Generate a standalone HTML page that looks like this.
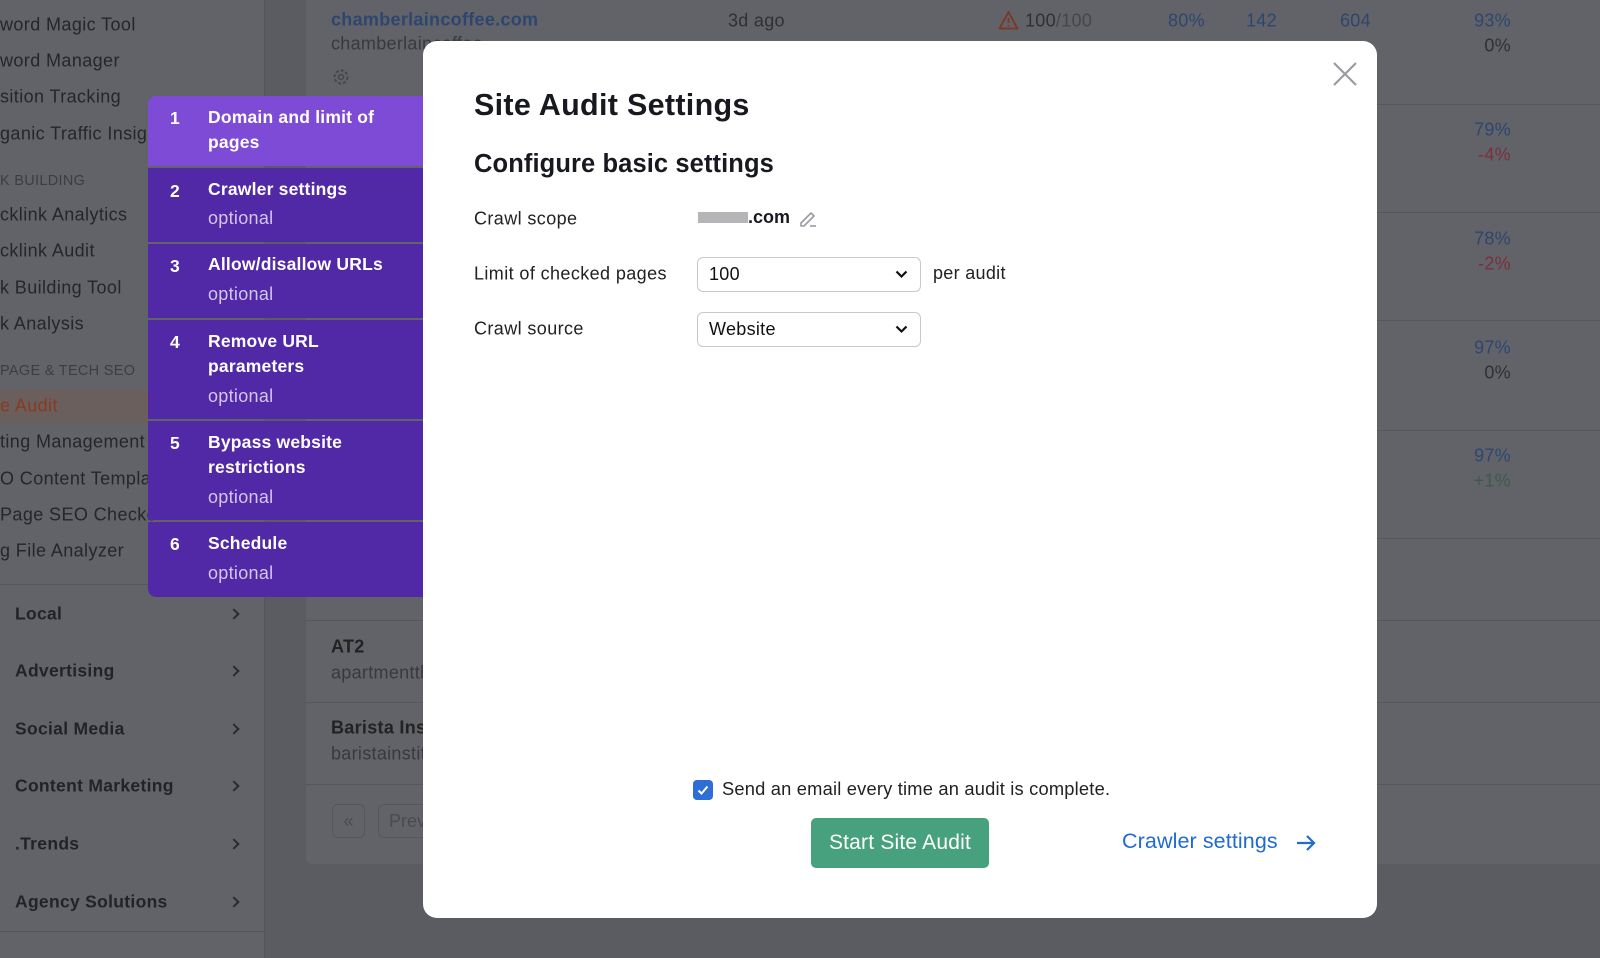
<!DOCTYPE html>
<html><head><meta charset="utf-8"><style>
*{box-sizing:border-box;margin:0;padding:0}
body{width:1600px;height:958px;overflow:hidden;background:#5b5c61;font-family:"Liberation Sans",sans-serif;position:relative;color:#222}
.a{position:absolute;white-space:nowrap}
.sb{position:absolute;left:0;top:0;width:265px;height:958px;background:#626368;border-right:1px solid #56575c}
.si{position:absolute;left:0;font-size:18px;letter-spacing:.4px;color:#25262b;transform:translateY(-50%)}
.sec{position:absolute;left:0;font-size:14.5px;letter-spacing:.3px;color:#3c3d42;transform:translateY(-50%)}
.grp{position:absolute;left:15px;font-size:17.5px;letter-spacing:.3px;font-weight:bold;color:#222328;transform:translateY(-50%)}
.chev{position:absolute;left:230px;width:8px;height:8px;border-right:2px solid #2a2b30;border-top:2px solid #2a2b30;transform:translateY(-50%) rotate(45deg)}
.hl{position:absolute;left:0;top:389px;width:148px;height:34px;background:#6a5f5d}
.card{position:absolute;left:306px;top:0;width:1300px;height:864px;background:#626368;border-radius:0 0 6px 6px}
.sep{position:absolute;left:306px;width:1294px;height:1px;background:#56575c}
.tv{position:absolute;font-size:18px;letter-spacing:.3px;transform:translateY(-50%)}
.blue{color:#2d4670}.red{color:#7a2f3a}.grn{color:#3e5a4a}.gry{color:#2f3035}
.step{position:absolute;left:148px;width:275px;background:#5128a6;color:#fff}
.step .n{position:absolute;left:22px;font-size:17.5px;font-weight:bold}
.step .t{position:absolute;left:60px;font-size:17.5px;letter-spacing:.2px;font-weight:bold;line-height:25px}
.step .o{position:absolute;left:60px;font-size:18px;letter-spacing:.3px;color:#d3c6f0}
.modal{position:absolute;left:423px;top:41px;width:954px;height:877px;background:#fff;border-radius:14px}
.lbl{position:absolute;left:51px;font-size:18px;letter-spacing:.4px;color:#222;transform:translateY(-50%)}
.sel{position:absolute;left:274px;width:224px;height:35px;border:1px solid #c8c9ce;border-radius:6px;font-size:18px;letter-spacing:.3px;padding:0 0 0 11px;line-height:33px;color:#111}
.sel svg{position:absolute;right:12px;top:12px}
</style></head><body>
<div class="sb">
<div class="si" style="top:25px">word Magic Tool</div>
<div class="si" style="top:61px">word Manager</div>
<div class="si" style="top:97px">sition Tracking</div>
<div class="si" style="top:134px">ganic Traffic Insigh</div>
<div class="sec" style="top:181px">K BUILDING</div>
<div class="si" style="top:215px">cklink Analytics</div>
<div class="si" style="top:251px">cklink Audit</div>
<div class="si" style="top:288px">k Building Tool</div>
<div class="si" style="top:324px">k Analysis</div>
<div class="sec" style="top:371px">PAGE &amp; TECH SEO</div>
<div class="hl"></div>
<div class="si" style="top:406px;color:#8a3a22">e Audit</div>
<div class="si" style="top:442px">ting Management</div>
<div class="si" style="top:479px">O Content Templat</div>
<div class="si" style="top:515px">Page SEO Checke</div>
<div class="si" style="top:551px">g File Analyzer</div>
<div class="a" style="left:0;top:584px;width:265px;height:1px;background:#56575c"></div>
<div class="grp" style="top:614px">Local</div><div class="chev" style="top:614px"></div>
<div class="grp" style="top:671px">Advertising</div><div class="chev" style="top:671px"></div>
<div class="grp" style="top:729px">Social Media</div><div class="chev" style="top:729px"></div>
<div class="grp" style="top:786px">Content Marketing</div><div class="chev" style="top:786px"></div>
<div class="grp" style="top:844px">.Trends</div><div class="chev" style="top:844px"></div>
<div class="grp" style="top:902px">Agency Solutions</div><div class="chev" style="top:902px"></div>
<div class="a" style="left:0;top:931px;width:265px;height:1px;background:#56575c"></div>
</div>
<div class="card"></div>
<div class="sep" style="top:104px"></div><div class="sep" style="top:212px"></div><div class="sep" style="top:320px"></div><div class="sep" style="top:430px"></div><div class="sep" style="top:538px"></div><div class="sep" style="top:620px"></div><div class="sep" style="top:702px"></div><div class="sep" style="top:784px"></div>
<div class="tv blue" style="left:331px;top:20px;font-weight:bold">chamberlaincoffee.com</div>
<div class="tv gry" style="left:331px;top:44px;color:#38393e">chamberlaincoffee</div>
<svg class="a" style="left:331px;top:67px" width="20" height="20" viewBox="0 0 20 20"><circle cx="10" cy="10" r="6.5" fill="none" stroke="#45464b" stroke-width="2" stroke-dasharray="3 2"/><circle cx="10" cy="10" r="2.5" fill="none" stroke="#45464b" stroke-width="1.5"/></svg>
<div class="tv gry" style="left:728px;top:21px">3d ago</div>
<svg class="a" style="left:998px;top:10px" width="21" height="20" viewBox="0 0 21 20"><path d="M10.5 2 L19.5 18.5 H1.5 Z" fill="none" stroke="#7a3a2a" stroke-width="2" stroke-linejoin="round"/><path d="M10.5 8v5M10.5 15v1.5" stroke="#7a3a2a" stroke-width="2"/></svg>
<div class="tv gry" style="left:1025px;top:21px">100<span style="color:#45464b">/100</span></div>
<div class="tv blue" style="left:1168px;top:21px">80%</div>
<div class="tv blue" style="left:1246px;top:21px">142</div>
<div class="tv blue" style="left:1340px;top:21px">604</div>
<div class="tv blue" style="right:89px;top:21px">93%</div><div class="tv gry" style="right:89px;top:46px">0%</div>
<div class="tv blue" style="right:89px;top:130px">79%</div><div class="tv red" style="right:89px;top:155px">-4%</div>
<div class="tv blue" style="right:89px;top:239px">78%</div><div class="tv red" style="right:89px;top:264px">-2%</div>
<div class="tv blue" style="right:89px;top:348px">97%</div><div class="tv gry" style="right:89px;top:373px">0%</div>
<div class="tv blue" style="right:89px;top:456px">97%</div><div class="tv grn" style="right:89px;top:481px">+1%</div>
<div class="tv gry" style="left:331px;top:647px;font-weight:bold;color:#222">AT2</div>
<div class="tv gry" style="left:331px;top:673px;color:#38393e">apartmenttherapy</div>
<div class="tv gry" style="left:331px;top:728px;font-weight:bold;color:#222">Barista Institute</div>
<div class="tv gry" style="left:331px;top:754px;color:#38393e">baristainstitute</div>
<div class="a" style="left:332px;top:804px;width:33px;height:34px;border:1px solid #56575c;border-radius:6px;color:#4a4b50;font-size:18px;text-align:center;line-height:32px">«</div>
<div class="a" style="left:378px;top:804px;width:80px;height:34px;border:1px solid #56575c;border-radius:6px;color:#4a4b50;font-size:18px;padding-left:10px;line-height:32px">Prev</div>

<div class="step" style="top:96px;height:70px;background:#7d4bd6;border-radius:8px 0 0 0"><div class="n" style="top:12px">1</div><div class="t" style="top:9px">Domain and limit of<br>pages</div></div>
<div class="step" style="top:168px;height:74px"><div class="n" style="top:13px">2</div><div class="t" style="top:9px">Crawler settings</div><div class="o" style="top:40px">optional</div></div>
<div class="step" style="top:244px;height:74px"><div class="n" style="top:12px">3</div><div class="t" style="top:8px">Allow/disallow URLs</div><div class="o" style="top:40px">optional</div></div>
<div class="step" style="top:320px;height:99px"><div class="n" style="top:12px">4</div><div class="t" style="top:9px">Remove URL<br>parameters</div><div class="o" style="top:66px">optional</div></div>
<div class="step" style="top:421px;height:99px"><div class="n" style="top:12px">5</div><div class="t" style="top:9px">Bypass website<br>restrictions</div><div class="o" style="top:66px">optional</div></div>
<div class="step" style="top:522px;height:75px;border-radius:0 0 0 8px"><div class="n" style="top:12px">6</div><div class="t" style="top:9px">Schedule</div><div class="o" style="top:41px">optional</div></div>

<div class="modal">
<svg class="a" style="left:909px;top:20px" width="26" height="26" viewBox="0 0 26 26"><path d="M2 2L24 24M24 2L2 24" stroke="#9a9ba3" stroke-width="2.2"/></svg>
<div class="a" style="left:51px;top:47px;font-size:30.5px;letter-spacing:.3px;font-weight:bold;color:#181920">Site Audit Settings</div>
<div class="a" style="left:51px;top:109px;font-size:25.5px;letter-spacing:.1px;font-weight:bold;color:#181920">Configure basic settings</div>
<div class="lbl" style="top:178px">Crawl scope</div>
<div class="a" style="left:275px;top:171px;width:50px;height:11px;background:#b5b5b8"></div>
<div class="a" style="left:325px;top:166px;font-size:18px;font-weight:bold;color:#181920">.com</div>
<svg class="a" style="left:375px;top:167px" width="20" height="20" viewBox="0 0 20 20"><path d="M3 15L13 5l3 3-10 10H3z" fill="none" stroke="#9a9ba3" stroke-width="1.6" stroke-linejoin="round"/><path d="M12 18h6" stroke="#9a9ba3" stroke-width="1.6"/></svg>
<div class="lbl" style="top:233px">Limit of checked pages</div>
<div class="sel" style="top:216px">100<svg width="13" height="9" viewBox="0 0 13 9"><path d="M1.5 1.5L6.5 6.5 11.5 1.5" fill="none" stroke="#111" stroke-width="2.2"/></svg></div>
<div class="a" style="left:510px;top:222px;font-size:18px;letter-spacing:.3px;color:#222">per audit</div>
<div class="lbl" style="top:288px">Crawl source</div>
<div class="sel" style="top:271px">Website<svg width="13" height="9" viewBox="0 0 13 9"><path d="M1.5 1.5L6.5 6.5 11.5 1.5" fill="none" stroke="#111" stroke-width="2.2"/></svg></div>
<div class="a" style="left:270px;top:739px;width:20px;height:20px;background:#2e6ed6;border-radius:4px"><svg width="20" height="20" viewBox="0 0 20 20"><path d="M5.5 10.5l3 3 6-7" fill="none" stroke="#fff" stroke-width="2"/></svg></div>
<div class="a" style="left:299px;top:737px;font-size:18.3px;letter-spacing:.2px;color:#222">Send an email every time an audit is complete.</div>
<div class="a" style="left:388px;top:777px;width:178px;height:50px;background:#47a07e;border-radius:5px;color:#fff;font-size:21px;letter-spacing:.2px;text-align:center;line-height:50px">Start Site Audit</div>
<div class="a" style="left:699px;top:788px;font-size:21.5px;letter-spacing:.1px;color:#1f6bd0">Crawler settings</div>
<svg class="a" style="left:873px;top:793px" width="20" height="18" viewBox="0 0 20 18"><path d="M1 9h17M11 2l7 7-7 7" fill="none" stroke="#1f6bd0" stroke-width="2.2"/></svg>
</div>
</body></html>
